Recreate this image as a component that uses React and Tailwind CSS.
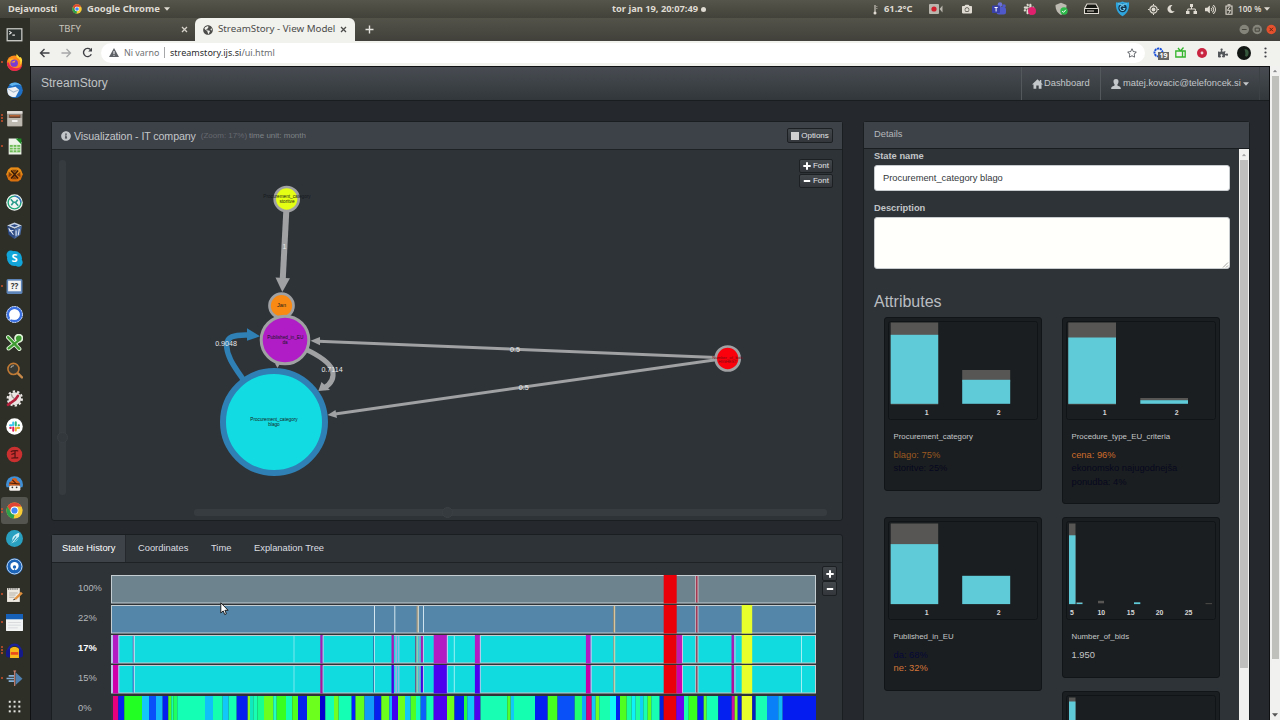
import React from 'react';
import { FaSlack, FaRegStar, FaPuzzlePiece, FaCamera, FaMoon, FaVolumeUp, FaGlobeAmericas, FaInfoCircle } from 'react-icons/fa';

const launcher = [
    {
        name: 'terminal', art: (
            <g>
                <rect x="0.5" y="2" width="15" height="12.5" fill="#c9cac6" />
                <rect x="1.7" y="3.2" width="12.6" height="10" fill="#2b322f" />
                <path d="M3 4.8l2 1.5-2 1.5M6 8.6h2.4" stroke="#e6e6e6" fill="none" />
            </g>
        )
    },
    {
        name: 'firefox', dots: 1, art: (
            <g>
                <circle cx="8" cy="8.5" r="7.2" fill="#ff8a1c" />
                <path d="M1 8c0 5 3.300 8 7 8 4.500 0 7-3 7.300-6-2 3-5 4-8 3-3-.8-4.500-3-4.500-5z" fill="#e9264f" />
                <path d="M10 0c-1 2 0 3 2 4.500 1.500 1.500 2 3.500 1 5.500 3-2.500 2.500-5 1-7-.5 0-1 0-1.300.5C12 2 11 1 10 0z" fill="#ffd93a" />
                <path d="M1.500 3l1.500 2c2-1 4-1 5 0L4 7z" fill="#ffb52a" />
                <circle cx="7.700" cy="8.600" r="3.500" fill="#7a3bd2" />
                <path d="M4.500 7.500c2 0 2.500-1.500 4.500-1.500L8 8H6z" fill="#ffa42a" />
            </g>
        )
    },
    {
        name: 'thunderbird', art: (
            <g>
                <circle cx="8.5" cy="7.800" r="7.300" fill="#1f6fc4" />
                <path d="M3 2.500C6-.5 12-.5 15 4c-3-2-7-1.500-9 0z" fill="#5fb3ef" />
                <path d="M1 6l8-1.500 3.500 3L9 14c-4 .8-7-1.500-7.500-4z" fill="#eef0f3" />
                <path d="M2 6.500l5 3 5-2" stroke="#a9b9cc" fill="none" />
            </g>
        )
    },
    {
        name: 'files', dots: 3, art: (
            <g>
                <rect x="1" y="1" width="14.500" height="14.500" rx="1" fill="#a19a90" />
                <rect x="1" y="1" width="14.500" height="2.500" fill="#dedbd6" />
                <path d="M3 4.500h10.500v3H3z" fill="#5c3d2d" />
                <path d="M3.500 5h9.500v1h-9.500z" fill="#e2793e" />
                <rect x="1.500" y="7.500" width="13.500" height="7.500" fill="#bdb8b0" />
                <rect x="5.500" y="9.500" width="5.500" height="1.800" rx=".6" fill="#f3f2f0" />
            </g>
        )
    },
    {
        name: 'calc', dots: 1, art: (
            <g>
                <path d="M2.500.5H11L14.500 4v11.500h-12z" fill="#eef3ea" />
                <path d="M9 .5h5.500V6z" fill="#1d8a24" />
                <rect x="3.500" y="6.500" width="10" height="7" fill="#6cbb55" />
                <path d="M3.500 8.800h10M3.500 11.200h10M6.800 6.500v7M10.200 6.500v7" stroke="#e3f1dc" strokeWidth=".8" />
            </g>
        )
    },
    {
        name: 'hex', art: (
            <g>
                <path d="M4.500 1.500h7L14 3.500 15.800 8 14 12.500l-2.500 2h-7L2 12.500.2 8 2 3.500z" fill="#d9710f" />
                <path d="M4.500 1.500h7L14 3.500 15.800 8H.2L2 3.500z" fill="#f0a01c" opacity=".6" />
                <path d="M4.800 4.200l6.600 7.600M11.400 4.200l-6.600 7.600" stroke="#3a1a08" strokeWidth="1.500" />
                <path d="M5.500 3.500h5L8 6.500zM5.500 12.500h5L8 9.500zM2.500 5.500L6 8l-3.500 2.500zM13.500 5.500L10 8l3.500 2.500z" fill="#5b2a0a" opacity=".75" />
            </g>
        )
    },
    {
        name: 'sync', art: (
            <g>
                <circle cx="8" cy="8" r="7.800" fill="#f1f5f3" />
                <circle cx="8" cy="8" r="6" fill="none" stroke="#1fa67a" strokeWidth="1.300" />
                <path d="M8 2a6 6 0 0 1 6 6" fill="none" stroke="#3f72c0" strokeWidth="1.300" />
                <path d="M4.500 5l2.500 2.800L5 10.500M11.500 11L9 8.200 11 5.500M7 7.800h2" fill="none" stroke="#2b9c8c" strokeWidth="1.500" />
            </g>
        )
    },
    {
        name: 'virtualbox', art: (
            <g>
                <path d="M8 .5l7 2.800-7 3-7-3z" fill="#c5d2e4" />
                <path d="M1 3.500l7 3V16l-5.500-4z" fill="#2c4a86" />
                <path d="M15 3.500l-7 3V16l5.500-4z" fill="#4a6da8" />
                <path d="M2.500 6l4.500 6M9.500 8v5M12.500 6.500l-1 6M3 8.500l4-.5" stroke="#e3eaf4" strokeWidth="1" />
                <path d="M4.500 3.300L8 2l3.500 1.300L8 4.800z" fill="#2c4a86" />
            </g>
        )
    },
    {
        name: 'skype', art: (
            <g>
                <circle cx="8" cy="8" r="7" fill="#11a5d9" />
                <circle cx="4.500" cy="4.500" r="4" fill="#11a5d9" />
                <circle cx="11.800" cy="11.800" r="3.900" fill="#11a5d9" />
                <text x="8" y="11.700" fontSize="10.500" fontWeight="700" textAnchor="middle" fill="#fff" fontFamily="Noto Sans, sans-serif">S</text>
            </g>
        )
    },
    {
        name: 'calendar', dots: 1, art: (
            <g>
                <rect x=".5" y="1" width="15" height="14" rx="1.500" fill="#5d84b8" />
                <rect x="2" y="2.500" width="12" height="10" fill="#f2f3f2" />
                <text x="8" y="10.500" fontSize="7.500" fontWeight="700" textAnchor="middle" fill="#333" fontFamily="Noto Sans, sans-serif">??</text>
            </g>
        )
    },
    {
        name: 'signal', art: (
            <g>
                <circle cx="8" cy="8" r="7.800" fill="#dfe8fb" />
                <circle cx="8" cy="8" r="6.300" fill="none" stroke="#3a6fe0" strokeWidth="2.600" />
                <circle cx="8" cy="8" r="7.500" fill="none" stroke="#dfe8fb" strokeWidth=".8" strokeDasharray="1.500 1" />
                <circle cx="8" cy="8" r="4.900" fill="#fff" />
                <path d="M3.200 13.200l.8-4 3 3z" fill="#fff" />
            </g>
        )
    },
    {
        name: 'xournal', art: (
            <g>
                <path d="M2 3l10.500 11M12.500 5.500L2.500 13.500" stroke="#dff2d8" strokeWidth="4" strokeLinecap="round" />
                <circle cx="12" cy="4" r="2.800" fill="none" stroke="#dff2d8" strokeWidth="3" />
                <path d="M2 3l10.500 11M12.500 5.500L2.500 13.500" stroke="#3e9c33" strokeWidth="2.200" strokeLinecap="round" />
                <circle cx="12" cy="4" r="2" fill="#3e9c33" stroke="#3e9c33" strokeWidth="1.300" />
            </g>
        )
    },
    {
        name: 'search', art: (
            <g>
                <path d="M11 10.500l4 4" stroke="#c88a4a" strokeWidth="2.200" strokeLinecap="round" />
                <circle cx="7" cy="6.500" r="5.200" fill="#3a3a34" stroke="#c07a34" strokeWidth="1.500" />
                <path d="M4.500 5.500a3 3 0 0 1 3-2" stroke="#a9a9a2" fill="none" />
            </g>
        )
    },
    {
        name: 'settings', art: (
            <g>
                <circle cx="8.300" cy="8" r="6" fill="#e9e6e4" />
                <circle cx="8.300" cy="8" r="6.700" fill="none" stroke="#e9e6e4" strokeWidth="2" strokeDasharray="2.200 2" />
                <path d="M5 4l1 2.500 3 2.500" stroke="#9d9590" strokeWidth="1.300" fill="none" />
                <path d="M1.800 14l7-5 2.500-3.500" stroke="#b3213c" strokeWidth="2.400" strokeLinecap="round" fill="none" />
            </g>
        )
    },
    {
        name: 'slack', art: (
            <g>
                <circle cx="8" cy="8" r="7.800" fill="#fff" />
                <g strokeWidth="1.900" strokeLinecap="round">
                    <path d="M6.800 4.300v2.200M3.800 6.800h1.500" stroke="#36c5f0" />
                    <path d="M9.200 4v3M11.900 6.800h.3" stroke="#2eb67d" />
                    <path d="M9.200 9.500v2.300M11 9.300h1.300" stroke="#ecb22e" />
                    <path d="M6.800 9v3M4 9.300h.5" stroke="#e01e5a" />
                </g>
            </g>
        )
    },
    {
        name: 'red', art: (
            <g>
                <circle cx="8" cy="8" r="7.300" fill="#c9302f" />
                <path d="M4.500 5.500c2-1.500 4-1 7-1M8.500 5v6M5 8l3-1M5 11.500c2-.8 4 .2 6.500-.5" stroke="#571414" strokeWidth="1.200" fill="none" />
            </g>
        )
    },
    {
        name: 'chef', art: (
            <g>
                <path d="M0 10a8 8 0 0 1 16 0l-.5 2.500H.5z" fill="#3f8fd6" />
                <path d="M2.500 11c0-3 2-4 3-5 0-3 5-3 5 0 1.500 1 3 2 3 5z" fill="#d4621e" />
                <path d="M3 8.500l10 1M6 5.500l4 4" stroke="#4a1d0b" />
                <rect x="3" y="11" width="10.500" height="4.800" rx="1.500" fill="#f4f0ec" />
                <circle cx="6" cy="12.500" r=".8" fill="#333" />
                <circle cx="10" cy="12.500" r=".8" fill="#333" />
            </g>
        )
    },
    { name: 'chrome', dots: 2, active: true, art: <ChromeArt /> },
    {
        name: 'feather', art: (
            <g>
                <circle cx="8" cy="8" r="8" fill="#2aa0c0" />
                <path d="M4.500 13L6 9.500C5.500 6 8.500 4 12.500 2.500 12.500 7 11 11 7 11.500z" fill="#cfeef5" />
                <path d="M4.500 13l5-7M8 11l4-4" stroke="#2aa0c0" />
            </g>
        )
    },
    {
        name: 'blue', art: (
            <g>
                <circle cx="8" cy="8" r="7.800" fill="#1c64b8" />
                <circle cx="8" cy="8" r="7" fill="none" stroke="#d5e4f5" strokeWidth=".8" />
                <circle cx="8" cy="7.600" r="3.900" fill="#fff" />
                <circle cx="8" cy="8.500" r="1.600" fill="#1c64b8" />
                <path d="M6.500 13.500L8 10l2 3.500z" fill="#1c64b8" />
            </g>
        )
    },
    {
        name: 'editor', dots: 1, art: (
            <g>
                <rect x="1" y="2" width="12" height="13" fill="#eeeae2" />
                <path d="M2.500 2v1.500M4.500 2v1.500M6.500 2v1.500M8.500 2v1.500M10.500 2v1.500" stroke="#555" />
                <path d="M3 6.500h8M3 8.500h6M3 10.500h5" stroke="#b4b0a8" />
                <path d="M7.500 12l6.500-6.500 1.800 1.500L9.500 13z" fill="#e08f3c" />
                <path d="M6.500 13.500l1-1.500 1.500 1z" fill="#333" />
            </g>
        )
    },
    {
        name: 'window', dots: 1, art: (
            <g>
                <rect x="0" y="0" width="16" height="16" rx=".8" fill="#f2f3f3" />
                <path d="M0 0h16v5H0z" fill="#1660b8" />
                <path d="M2 8h12M2 10.500h12M2 13h9" stroke="#d5d7d9" strokeWidth=".8" />
            </g>
        )
    },
    {
        name: 'audacity', dots: 3, art: (
            <g>
                <path d="M2 9a6 6.500 0 0 1 12 0" fill="none" stroke="#1a1f9c" strokeWidth="2" />
                <rect x="0" y="7" width="4.500" height="7.500" rx="2" fill="#151a8a" />
                <rect x="11.500" y="7" width="4.500" height="7.500" rx="2" fill="#151a8a" />
                <path d="M3.800 6.500c2-2.500 6.400-2.500 8.400 0V15H3.800z" fill="#f5b81d" />
                <path d="M4.500 9.500h7v2.500h-7z" fill="#e8491c" />
            </g>
        )
    },
    {
        name: 'subtitle', dots: 1, art: (
            <g>
                <path d="M9 2l6.500 6.200L9 14z" fill="#4f7fae" />
                <path d="M2.500 5.500h5M.5 8h7M2.500 10.500h5" stroke="#86b0d8" strokeWidth="1.500" />
                <path d="M8.200 1v14M7 1h2.500" stroke="#d88a78" />
            </g>
        )
    },
    {
        name: 'grid', art: (
            <g fill="#e3e3df">
                {[3.500, 8, 12.500].map(y => [3.500, 8, 12.500].map(x => <rect key={x + '-' + y} x={x - 0.9} y={y - 0.9} width="1.900" height="1.900" />))}
            </g>
        )
    }
];

function ChromeArt() {
    return (
        <g>
            <circle cx="8" cy="8" r="7.600" fill="#f7cb35" />
            <path d="M1.400 4.200A7.600 7.600 0 0 1 14.600 4.200H8A3.800 3.800 0 0 0 4.600 9.800z" fill="#e04434" />
            <path d="M1.400 4.200L4.700 9.900 8 11.800l-.8 3.800A7.600 7.600 0 0 1 1.400 4.200z" fill="#2ca04c" />
            <circle cx="8" cy="8" r="3.700" fill="#fff" />
            <circle cx="8" cy="8" r="2.900" fill="#4285f4" />
        </g>
    );
}

const Launcher = () => (
    <aside className="w-[30px] shrink-0 bg-[#2e2f27] pt-[2px] flex flex-col">
        {launcher.map(app => (
            <div key={app.name} className="h-7 shrink-0 flex items-center">
                <div className="relative z-10 w-[3px] shrink-0 flex flex-col items-end gap-[1px]">
                    {Array.from({ length: app.dots || 0 }).map((_, i) => <div key={i} className="w-[2px] h-[2px] rounded-full bg-[#d0502c]" />)}
                </div>
                <div className={app.active ? '-ml-[2px] w-[27px] h-[27px] rounded-[3px] bg-[#54554f] flex items-center justify-center' : '-ml-[2px] w-[27px] h-[27px] flex items-center justify-center'}>
                    <svg width="17" height="17" viewBox="0 0 16 16">{app.art}</svg>
                </div>
            </div>
        ))}
    </aside>
);

const Caret = ({ className }) => (
    <svg width="6" height="4" viewBox="0 0 6 4" className={className}><path d="M0 .3h6L3 3.700z" fill="currentColor" /></svg>
);

const TopBar = () => (
    <header className="h-[18px] shrink-0 flex items-center bg-linear-to-b from-[#56554b] to-[#43423a] text-[#dfdbd2] text-[9.3px] font-bold font-['Noto_Sans',sans-serif]">
        <div className="w-[72px] pl-2">Dejavnosti</div>
        <svg width="10" height="10" viewBox="0 0 16 16"><ChromeArt /></svg>
        <div className="w-[78px] pl-[5px] text-[9.5px] whitespace-nowrap">Google Chrome</div>
        <Caret className="ml-[4px]" />
        <div className="ml-[442px] w-[91px] whitespace-nowrap text-[9.3px] text-left">tor jan 19, 20:07:49</div>
        <div className="w-[5px] h-[5px] rounded-full bg-[#dfdbd2] -ml-[2px]" />
        <div className="ml-auto w-[411px] flex items-center">
            <div className="w-[12px] flex justify-center">
                <svg width="5" height="11" viewBox="0 0 5 11"><path d="M2 1v7" stroke="#dfdbd2" strokeWidth="1" /><circle cx="2" cy="9" r="1.500" fill="#dfdbd2" /><path d="M3 2.500h1.500M3 4.500h1.500" stroke="#aaa79f" strokeWidth=".7" /></svg>
            </div>
            <div className="w-[48px] pl-[3px]">61.2°C</div>
            <div className="w-[33px]">
                <svg width="14" height="10" viewBox="0 0 14 10"><rect width="10" height="10" rx="1" fill="#b9b6ae" /><path d="M10.500 5l3-3.500v7z" fill="#b9b6ae" /><circle cx="5" cy="5" r="2.600" fill="#d21f2b" /></svg>
            </div>
            <div className="w-[30px]"><FaCamera size={10} /></div>
            <div className="w-[31px]">
                <svg width="15" height="14" viewBox="0 0 15 14"><circle cx="12" cy="4" r="1.800" fill="#5059c9" /><circle cx="8" cy="2.600" r="2.300" fill="#6a72d8" /><rect x="4.500" y="5" width="9.500" height="7.500" rx="2.500" fill="#5059c9" /><rect x="0" y="3.500" width="8" height="7.500" rx=".8" fill="#3940a8" /><path d="M2.500 5.500h3.200M4.100 5.500v4" stroke="#fff" strokeWidth="1" /></svg>
            </div>
            <div className="w-[32px] flex items-end">
                <FaSlack size={12} />
                <div className="w-[8px] h-[8px] rounded-full bg-[#e0206c] -ml-[7px]" />
            </div>
            <div className="w-[29px]">
                <svg width="13" height="14" viewBox="0 0 13 14"><path d="M6 .8L11.500 3c0 5-2 8-5.500 10C2.500 11 .5 8 .5 3z" fill="#bdbab2" /><circle cx="9" cy="9" r="3.700" fill="#2db84a" /><path d="M7.200 9l1.300 1.400 2.300-2.600" stroke="#fff" fill="none" /></svg>
            </div>
            <div className="w-[31px]">
                <svg width="15" height="12" viewBox="0 0 15 12"><path d="M3 1h9l2.500 4.500v5H.5v-5z" fill="#161613" stroke="#dfdbd2" strokeWidth="1.100" /><path d="M1 5.500h13M3 8h7" stroke="#dfdbd2" strokeWidth="1.200" /></svg>
            </div>
            <div className="w-[33px]">
                <svg width="15" height="16" viewBox="0 0 15 16"><path d="M7.500.5c2 1 4 1.300 6.500.8.5 6-1 10.700-6.500 14C2 12 .5 7.300 1 1.300 3.500 1.800 5.500 1.500 7.500.5z" fill="#2ea5dd" /><circle cx="7.500" cy="7" r="4.200" fill="#14354c" /><path d="M9.300 5.500a2.400 2.400 0 1 0 .5 2H7.800M3 2.800l4.500 1 4.500-1" stroke="#6fc8ee" strokeWidth="1.100" fill="none" /></svg>
            </div>
            <div className="w-[19px]">
                <svg width="11" height="11" viewBox="0 0 11 11"><circle cx="5.500" cy="5.500" r="3.600" fill="none" stroke="#dfdbd2" strokeWidth="1.200" /><circle cx="5.500" cy="5.500" r="1.900" fill="#dfdbd2" /><path d="M5.500 0v1.500M5.500 9.500V11M0 5.500h1.500M9.500 5.500H11" stroke="#dfdbd2" /></svg>
            </div>
            <div className="w-[19px]"><FaMoon size={8} /></div>
            <div className="w-[19px]">
                <svg width="11" height="10" viewBox="0 0 11 10"><path d="M4 0h3v3H4zM0 7h3.500v3H0zM7.500 7H11v3H7.500z" fill="#dfdbd2" /><path d="M5.500 3v2M1.800 7V5h7.500v2" stroke="#dfdbd2" fill="none" /></svg>
            </div>
            <div className="w-[20px]"><FaVolumeUp size={11} /></div>
            <div className="w-[13px]">
                <svg width="8" height="11" viewBox="0 0 8 11"><path d="M1 2h6v8.300H1zM2.500.8h3" fill="none" stroke="#dfdbd2" strokeWidth="1.100" /><path d="M4.500 3L2.500 6.300h3L3.500 9.500" stroke="#dfdbd2" fill="none" /></svg>
            </div>
            <div className="w-[26px] text-[8.2px] font-semibold whitespace-nowrap">100 %</div>
            <Caret />
        </div>
    </header>
);

const Cross = ({ color }) => (
    <svg width="7" height="7" viewBox="0 0 7 7"><path d="M1 1l5 5M6 1L1 6" stroke={color} strokeWidth="1.300" /></svg>
);

const Browser = () => (
    <div className="shrink-0 font-['Noto_Sans',sans-serif]">
        <div className="h-[23px] flex bg-linear-to-b from-[#54534a] to-[#41403a]">
            <div className="w-[165px] pl-[29px] pr-[7px] flex items-center justify-between text-[9.5px] text-[#c9c6bd]">
                <span>TBFY</span>
                <Cross color="#d5d2ca" />
            </div>
            <div className="w-[160px] pl-[8px] pr-[8px] flex items-center rounded-t-[6px] bg-[#f1f1ee] text-[#4c4c4a]">
                <FaGlobeAmericas size={10} />
                <span className="ml-[5px] mr-auto text-[9.75px] whitespace-nowrap">StreamStory - View Model</span>
                <Cross color="#4c4c4a" />
            </div>
            <svg className="ml-[10px] mt-[7px]" width="9" height="9" viewBox="0 0 9 9"><path d="M4.500.5v8M.5 4.500h8" stroke="#e4e2dc" strokeWidth="1.400" /></svg>
            <div className="ml-auto mr-[4px] flex items-center gap-[3px]">
                <svg width="10.500" height="11" viewBox="0 0 11 11"><circle cx="5.500" cy="5.500" r="5" fill="#85847b" /><path d="M3 5.500h5" stroke="#45443c" /></svg>
                <svg width="10.500" height="11" viewBox="0 0 11 11"><circle cx="5.500" cy="5.500" r="5" fill="#85847b" /><path d="M3.300 4h4.400v3.300H3.300z" stroke="#45443c" fill="none" /></svg>
                <svg width="10.500" height="11" viewBox="0 0 11 11"><circle cx="5.500" cy="5.500" r="5" fill="#e5512d" /><path d="M3.700 3.700l3.600 3.600M7.300 3.700L3.700 7.300" stroke="#5c2213" /></svg>
            </div>
        </div>
        <div className="h-[25px] pb-[2px] flex items-center bg-[#f1f1ee]">
            <svg className="ml-[9px]" width="11" height="10" viewBox="0 0 11 10"><path d="M10.500 5H1.500M5.500 1L1.500 5l4 4" stroke="#3f4144" strokeWidth="1.400" fill="none" /></svg>
            <svg className="ml-[11px]" width="11" height="10" viewBox="0 0 11 10"><path d="M.5 5h9M5.500 1l4 4-4 4" stroke="#a6a8a8" strokeWidth="1.300" fill="none" /></svg>
            <svg className="ml-[10px]" width="11" height="11" viewBox="0 0 11 11"><path d="M9.300 7.300A4.100 4.100 0 1 1 8.500 2.600" stroke="#3f4144" strokeWidth="1.400" fill="none" /><path d="M10 .8v3.800H6.200z" fill="#3f4144" /></svg>
            <div className="ml-[8px] w-[1044px] h-[20px] rounded-full bg-white flex items-center px-[8px] text-[9.2px]">
                <svg width="10" height="9" viewBox="0 0 10 9"><path d="M5 0l5 9H0z" fill="#5f6368" /><path d="M5 3v3M5 6.800v1" stroke="#fff" /></svg>
                <span className="ml-[5px] w-[40px] text-[8.9px] text-[#6f7173] whitespace-nowrap">Ni varno</span>
                <div className="w-px h-[11px] bg-[#a5a7a9]" />
                <span className="ml-[5px] text-[#6b6d70] text-[9.05px]"><span className="text-[#2b2c2e]">streamstory.ijs.si</span>/ui.html</span>
                <FaRegStar size={10} className="ml-auto text-[#5f6368]" />
            </div>
            <div className="ml-[8px] w-[22px] relative">
                <svg width="11" height="11" viewBox="0 0 11 11"><circle cx="5.500" cy="5.500" r="4" fill="none" stroke="#1a50d8" strokeWidth="1.900" strokeDasharray="2.200 .6" /></svg>
                <span className="absolute left-[5px] top-[5px] w-[11px] h-[8px] leading-[8px] text-center bg-[#666] text-white text-[7px] font-bold">19</span>
            </div>
            <svg width="11" height="11" viewBox="0 0 11 11"><path d="M.8 4h9.400v6H.8zM7.500 4v6M3 1l2.500 3L8.500.500" stroke="#35b52c" strokeWidth="1.300" fill="none" /></svg>
            <svg className="ml-[11px]" width="10" height="10" viewBox="0 0 10 10"><circle cx="5" cy="5" r="5" fill="#c92440" /><circle cx="5" cy="5" r="1.400" fill="#f3d5d9" /></svg>
            <FaPuzzlePiece size={10} className="ml-[11px] text-[#54575a]" />
            <svg className="ml-[9px]" width="14" height="14" viewBox="0 0 14 14"><circle cx="7" cy="7" r="7" fill="#121714" /><path d="M7.500 3c4 0 5 3 3.500 6.500-1 1.500-2.500 1.500-3 0 1-2 0-3.500-.5-6.500z" fill="#35573b" /></svg>
            <svg className="ml-[13px]" width="3" height="11" viewBox="0 0 3 11" fill="#3f4144"><circle cx="1.500" cy="1.500" r="1.100" /><circle cx="1.500" cy="5.500" r="1.100" /><circle cx="1.500" cy="9.500" r="1.100" /></svg>
        </div>
    </div>
);

const NavBar = () => (
    <nav className="h-[35px] shrink-0 flex items-center border-y border-t-[#0e1012] border-b-[#1a1d1f] bg-linear-to-b from-[#484c52] via-[#3d4247] to-[#32373b] text-[#c4c7c9] text-[9.33px]">
        <span className="ml-[10px] pb-[1px] text-[12px] text-[#c0c3c5]">StreamStory</span>
        <div className="ml-auto h-full flex">
            <div className="w-[79px] flex items-center border-l border-[#53585d] pl-[10px]">
                <svg width="11" height="10" viewBox="0 0 11 10"><path d="M5.500.3L7.800 2.500V1h1.500v2.900L11 5.600H9.500V9.700H6.700V6.500H4.300v3.200H1.500V5.600H0z" fill="currentColor" /></svg>
                <span className="ml-[1px]">Dashboard</span>
            </div>
            <div className="w-[159px] flex items-center border-l border-[#53585d] pl-[10px] whitespace-nowrap">
                <svg width="10" height="10" viewBox="0 0 10 10"><path d="M5 0c2 0 2.700 1.300 2.500 3C7.300 4.500 6.500 5 6.300 6c0 1 3.400 1.200 3.500 3.200V10H.2v-.8C.3 7.200 3.700 7 3.700 6 3.500 5 2.700 4.500 2.500 3 2.300 1.300 3 0 5 0z" fill="currentColor" /></svg>
                <span className="ml-[2px]">matej.kovacic@telefoncek.si</span>
                <Caret className="ml-[2px]" />
            </div>
            <div className="w-[10px] border-l border-[#3c4146]" />
        </div>
    </nav>
);

const Sign = ({ minus }) => (
    <svg width="8" height="8" viewBox="0 0 8 8"><path d={minus ? 'M.800 4h6.400' : 'M.300 4h7.400M4 .300v7.400'} stroke="#fff" strokeWidth="2" /></svg>
);

const FontButton = ({ minus }) => (
    <button className="w-[34px] h-[14px] flex items-center justify-center gap-[2px] rounded-[2px] border border-[#1d2023] bg-linear-to-b from-[#43484d] to-[#33373b] text-[8px] text-[#e4e5e6]">
        <Sign minus={minus} />
        Font
    </button>
);

const SquareButton = ({ minus }) => (
    <button className="w-[15px] h-[15px] flex items-center justify-center rounded-[2px] border border-[#1d2023] bg-linear-to-b from-[#43484d] to-[#33373b]">
        <Sign minus={minus} />
    </button>
);

const Graph = () => (
    <svg width="776" height="346" viewBox="66 150 776 346" className="font-['Liberation_Sans',Arial,sans-serif]">
        <g stroke="#9fa1a2" fill="none">
            <path d="M286.300 211L282.700 280" strokeWidth="6" />
            <path d="M716 357.500L318 341.200" strokeWidth="3" />
            <path d="M716 359.700L335 414" strokeWidth="3" />
            <path d="M305 349C318 355 329 362 332.500 370C334.500 378 331 384 324 388" strokeWidth="5" />
        </g>
        <g fill="#9fa1a2">
            <path d="M275.500 277.500L290 278.300 282.300 292z" />
            <path d="M310.500 340.800L320 337v8.200z" />
            <path d="M327.500 415L335.500 410l1.500 8z" />
            <path d="M318.300 391L321.500 382l8.500 8z" />
        </g>
        <path d="M243.500 380C234 366 227 357 226.500 345C227 337 233 334.500 249 335" stroke="#2f80b5" strokeWidth="5.500" fill="none" />
        <path d="M260 336.300L247 328.300v12.500z" fill="#2f80b5" />
        <circle cx="286.700" cy="199" r="12" fill="#e4ff14" stroke="#9fa1a2" strokeWidth="2.700" />
        <circle cx="281.500" cy="305.700" r="12" fill="#f98a14" stroke="#9fa1a2" strokeWidth="2.700" />
        <circle cx="285" cy="340" r="23.800" fill="#b01cc6" stroke="#9fa1a2" strokeWidth="3" />
        <path d="M275 363.500h5L277.500 368z" fill="#9fa1a2" />
        <circle cx="274" cy="422" r="51" fill="#12dce1" stroke="#2f80b5" strokeWidth="6" />
        <circle cx="727.700" cy="358.500" r="12" fill="#fb000c" stroke="#9fa1a2" strokeWidth="2.700" />
        <g fill="#15191b" fontSize="4.700" textAnchor="middle">
            <text x="287" y="198">Procurement_category</text>
            <text x="287" y="202.700">storitve</text>
            <text x="281.500" y="307.300" fontSize="5.600">Jan</text>
            <text x="285.300" y="339">Published_in_EU</text>
            <text x="285" y="344">da</text>
            <text x="274" y="421">Procurement_category</text>
            <text x="274" y="426">blago</text>
            <g fill="#7a0d12" fontSize="4.200">
                <text x="727.500" y="358.500">Number_of_bids</text>
                <text x="727.500" y="362.500">HIGHEST</text>
            </g>
        </g>
        <g fill="#e8e9ea" fontSize="7.100" textAnchor="middle">
            <text x="226" y="345.500">0.9048</text>
            <text x="332" y="371.500">0.7114</text>
            <text x="515" y="351.500">0.5</text>
            <text x="523.700" y="389.500">0.5</text>
            <text x="284.500" y="248.500">1</text>
        </g>
    </svg>
);

const Visualization = () => (
    <section className="h-[400px] shrink-0 flex flex-col rounded-[3px] border border-[#1b1e21] bg-[#2e3338]">
        <div className="h-[28px] shrink-0 flex items-center pl-[9px] pr-[9px] border-b border-[#1f2225] bg-[#3d4148] text-[#c3c6c8]">
            <FaInfoCircle size={10} />
            <span className="ml-[3px] text-[10.67px] tracking-[-0.01em]">Visualization - IT company</span>
            <span className="ml-[5px] text-[8px] text-[#666a6f]">(Zoom: 17%)</span>
            <span className="ml-[2px] text-[8px] text-[#7d8387]">time unit: month</span>
            <button className="ml-auto w-[46px] h-[15px] flex items-center justify-center gap-[2px] rounded-[2px] border border-[#1d2023] bg-linear-to-b from-[#43484d] to-[#33373b] text-[8px] text-[#e4e5e6]">
                <span className="w-[8px] h-[8px] bg-[#cfcfcf]" />
                Options
            </button>
        </div>
        <div className="relative flex-1 flex flex-col">
            <div className="h-[346px] flex">
                <div className="w-[7px] ml-[7px] mt-[10px] h-[335px] rounded-[3px] bg-[#363b40] flex flex-col items-center">
                    <div className="mt-[272px] w-[11px] h-[11px] shrink-0 rounded-full bg-[#33383d] border border-[#3a3f44]" />
                </div>
                <Graph />
            </div>
            <div className="ml-[142px] mt-[13px] w-[633px] h-[7px] rounded-[3px] bg-[#373c41] flex items-center">
                <div className="ml-[248px] w-[11px] h-[11px] rounded-full bg-[#363b40] border border-[#3c4146]" />
            </div>
            <div className="absolute right-[9px] top-[9px] flex flex-col gap-[1px]">
                <FontButton />
                <FontButton minus />
            </div>
        </div>
    </section>
);

// every bar is a list of [x, width, colour]
const red = '#e90008';
const yellow = '#e9ff2c';
const redLine = [[695.300, 1, '#d9c0c8'], [696.300, 1.300, '#b01030'], [697.600, 0.800, '#e8c8cc']];
const thinEdges = [
    [293.500, 1, '#7be6ee'], [373.300, 0.800, '#2f5a9a'], [374.100, 0.900, '#b9e8f2'],
    [395.200, 2, '#9fa6dd'], [398.200, 1.200, '#a9b6e0'], [415.300, 1, '#8a2a6a'], [416.600, 1, '#d9c890'],
    [418.500, 2, '#7fa8c8'], [423, 1, '#b9c8e8'], [453.800, 1, '#9df0f4'], [613, 1.200, '#7fa59a'], [614.200, 1, '#e3d5a8'], [801, 1, '#a5eef2']
];
const levels = [
    { label: '100%', fill: '#6d838d', segments: [[663.700, 13, red], ...redLine] },
    {
        label: '22%', fill: '#5386a8',
        segments: [
            [374, 1, '#d5e6f0'], [394.300, 1, '#d5e6f0'], [416.600, 1.200, '#b59a70'], [417.800, 1, '#e4e0d0'], [423, 1, '#cfe3ee'],
            [613, 1, '#8c8a78'], [614, 1.200, '#d9c49c'], [663.700, 13, red], ...redLine, [741.700, 10.500, yellow]
        ]
    },
    {
        label: '17%', current: true, fill: '#12dbe0',
        segments: [
            [111, 2, '#b9c6e6'], [113, 5.300, '#b21cc2'], [118.300, 1, '#d9b0e6'], [132.800, 0.900, '#8a3aa0'], [133.700, 1, '#d8e8f4'],
            [320.300, 2.400, '#a51cb4'], [322.700, 1, '#c9b8e6'], [391.500, 2.400, '#a51cb4'], ...thinEdges, [420.900, 2, '#a51cb4'],
            [433.700, 13.200, '#b21cc2'], [446.900, 1, '#d9c8ee'], [474.900, 5, '#b21cc2'], [479.900, 1, '#c9c8ee'], [585.900, 4.800, '#b21cc2'], [590.700, 1, '#c9c8ee'],
            [663.700, 13, red], [676.700, 5.300, '#c01cb4'], [682, 1, '#d9b8e6'], ...redLine, [731.500, 2.500, '#a51cb4'], [734.500, 1, '#c9b8e6'], [741.700, 10.500, yellow]
        ]
    },
    {
        label: '15%', fill: '#12dbe0',
        segments: [
            [111, 2, '#b9c6e6'], [113, 5.300, '#cf00ac'], [118.300, 1, '#d9b0e6'], [132.800, 0.900, '#2a20b0'], [133.700, 1, '#d8e8f4'],
            [320.300, 2.400, '#b2109a'], [322.700, 1, '#a9b8e6'], [391.500, 2.400, '#4800e0'], ...thinEdges, [420.900, 2, '#4800e0'],
            [433.700, 13.200, '#4d00ee'], [446.900, 1, '#a9c8ee'], [474.900, 5, '#4d00ee'], [479.900, 1, '#a9c8ee'], [585.900, 4.800, '#c800a8'], [590.700, 1, '#c9c8ee'],
            [663.700, 13, red], [676.700, 5.300, '#cf00ac'], [682, 1, '#d9b8e6'], ...redLine, [731.500, 2.500, '#b0109a'], [734.500, 1, '#c9b8e6'], [741.700, 10.500, yellow]
        ]
    }
];

// leaf level: [start, colour], each one lasts until the next start
const leaves = [
    [111, '#3a3040'], [113, '#e6007e'], [118.300, '#0620ee'], [124.300, '#22ff22'], [142, '#12c8fa'], [149, '#0a50fa'], [156, '#12b8f8'], [162.700, '#0420ee'],
    [168.300, '#50f822'], [171.300, '#14ffb0'], [173.300, '#20ff60'], [177.300, '#14ffb4'], [205, '#10c0f8'], [213, '#14ffb0'], [222.700, '#12c8f8'], [228.700, '#14ffb0'],
    [236.700, '#0620f0'], [247.700, '#88f820'], [250, '#12e8c0'], [253.300, '#18ffb4'], [257.300, '#18ff90'], [264, '#6cff1e'], [273.300, '#22ffc0'], [276.700, '#38ff20'],
    [286, '#14ffb0'], [292.300, '#50ff22'], [298, '#0620f0'], [307, '#6cff1e'], [320, '#0400d0'], [325.300, '#14ffb4'], [334, '#70ff20'], [338.700, '#14ffb4'],
    [351.700, '#0420ff'], [355.500, '#60ff20'], [364.500, '#109cf8'], [374.300, '#0620f0'], [381.300, '#6cff1e'], [389.300, '#14b0f8'], [392, '#4000f0'], [398, '#6cff1e'],
    [405, '#12c8f8'], [410.700, '#50ff20'], [416, '#14ffb4'], [420.700, '#0a60f8'], [426.300, '#14ffb4'], [433.700, '#4d00ee'], [447, '#6cff1e'], [454.500, '#0420f0'],
    [464, '#22ff40'], [467.300, '#12c8f8'], [474.500, '#5000ee'], [480.500, '#18ffb4'], [507.300, '#50ff30'], [510.700, '#12c8f8'], [514, '#14ffb0'], [535, '#0420f0'],
    [547.700, '#44ff20'], [557.500, '#0a50f8'], [574.700, '#20ff70'], [582, '#12a8f8'], [586.300, '#d80080'], [591.700, '#12c8f8'], [595.700, '#70ff20'], [599.300, '#18ffb0'],
    [610, '#10f8f8'], [616, '#0420f0'], [620, '#50ff20'], [626.700, '#18ffa0'], [631.700, '#10f0f8'], [635.700, '#20ffa0'], [640, '#10d0f8'], [643.300, '#18ffb0'],
    [647.700, '#60ff20'], [651.300, '#18ffb4'], [659.700, '#0420e0'], [663.700, red], [676.300, '#7000f0'], [684, '#18ffb0'], [688.700, '#38ff20'], [697.500, '#0420f0'],
    [703.700, '#60ff30'], [706.700, '#14ffb4'], [718.300, '#0420f0'], [731.700, '#d010a0'], [734.700, '#80ff20'], [737.700, '#0420e0'], [741.700, yellow], [752.300, '#0420c0'],
    [755.700, '#18ffb4'], [767, '#0a80f8'], [778.300, '#10b8f8'], [782.700, '#041cf0'], [816, '#000']
];

const History = () => (
    <section className="h-[187px] shrink-0 flex flex-col rounded-t-[3px] border border-[#1b1e21] bg-[#2e3338]">
        <div className="h-[28px] shrink-0 flex border-b border-[#1f2225] text-[9.33px] text-[#dcdee0]">
            <div className="w-[74px] pl-[10px] flex items-center bg-[#3e434a] text-white border-r border-[#25282c]">State History</div>
            <div className="w-[73px] pl-[12px] flex items-center">Coordinates</div>
            <div className="w-[43px] pl-[12px] flex items-center">Time</div>
            <div className="pl-[12px] flex items-center whitespace-nowrap">Explanation Tree</div>
        </div>
        <div className="flex pt-[12px]">
            <div className="w-[59px] pl-[26px] text-[9.33px] text-[#b4b8ba]">
                {levels.map(l => (
                    <div key={l.label} className={l.current ? 'h-[30px] leading-[27px] font-bold text-white' : 'h-[30px] leading-[27px]'}>{l.label}</div>
                ))}
                <div className="h-[30px] leading-[27px]">0%</div>
            </div>
            <svg width="706" height="150" viewBox="111 575 706 150">
                {levels.map((l, i) => {
                    const y = 575.500 + i * 30;
                    return (
                        <g key={l.label}>
                            <rect x="111.500" y={y} width="704" height="27.500" fill={l.fill} stroke="#c3cdd2" strokeWidth="1" />
                            {l.segments.map(([x, w, color], n) => <rect key={n} x={x} y={y + (w > 2 ? -0.500 : 0.500)} width={w} height={w > 2 ? 28.500 : 26.500} fill={color} />)}
                        </g>
                    );
                })}
                {leaves.slice(0, -1).map(([x, color], i) => <rect key={x} x={x} y="696" width={leaves[i + 1][0] - x} height="30" fill={color} />)}
            </svg>
            <div className="ml-[5px] -mt-[9px] flex flex-col">
                <SquareButton />
                <SquareButton minus />
            </div>
        </div>
    </section>
);

const cyan = '#5fcad8';
const grey = '#575655';

const attributes = [
    [
        {
            name: 'Procurement_category', height: 'h-[174px] mb-[26px]',
            bars: [[2.700, 2, 47.500, 82, grey], [2.700, 14.300, 47.500, 69, cyan], [74.200, 49.500, 48, 12, grey], [74.200, 59.300, 48, 24, cyan]],
            ticks: [['1', 38.700], ['2', 110.700]],
            values: [['blago: 75%', 'text-[#9a5a22]'], ['storitve: 25%', 'text-[#06081f]']]
        },
        {
            name: 'Published_in_EU', height: 'h-[174px] mb-[27px]',
            bars: [[2.700, 3, 47.500, 80.600, grey], [2.700, 23.600, 47.500, 60, cyan], [74.200, 55.300, 48, 28.300, cyan]],
            ticks: [['1', 38.700], ['2', 110.700]],
            values: [['da: 68%', 'text-[#060938]'], ['ne: 32%', 'text-[#d5763a]']]
        }
    ],
    [
        {
            name: 'Procedure_type_EU_criteria', height: 'h-[187px] mb-[13px]',
            bars: [[2.300, 2, 47.700, 82, grey], [2.300, 17, 47.700, 66.300, cyan], [74.300, 77.500, 47.700, 2.500, grey], [74.300, 79.700, 47.700, 3.600, cyan]],
            ticks: [['1', 38.700], ['2', 110.700]],
            values: [['cena: 96%', 'text-[#cd6c2c]'], ['ekonomsko najugodnejša ponudba: 4%', 'text-[#06081f]']]
        },
        {
            name: 'Number_of_bids', height: 'h-[161px] mb-[13px]',
            bars: [
                [3, 3, 6.500, 80.600, grey], [3, 14.800, 6.500, 68.800, cyan], [10.500, 81.500, 6, 1, grey], [10.500, 82.300, 6, 1.300, cyan],
                [32, 80.300, 6, 2.500, grey], [68, 81.800, 6.300, 1.800, cyan], [139.500, 82.800, 6.500, 0.800, grey]
            ],
            ticks: [['5', 6], ['10', 35.300], ['15', 64.700], ['20', 93.500], ['25', 122.500]],
            values: [['1.950', 'text-[#c3c6c8]']]
        },
        {
            height: 'h-[161px]',
            bars: [[3, 3, 6.500, 80.600, grey], [3, 7, 6.500, 76.600, cyan]],
            ticks: [],
            values: []
        }
    ]
];

const AttributeCard = ({ attribute }) => (
    <div className={`${attribute.height} w-[157.5px] shrink-0 p-[3px] rounded-[3px] border border-[#121517] bg-[#1b1e20]`}>
        <svg width="150" height="99" viewBox="0 0.5 150 99" className="rounded-[2px] font-['Liberation_Sans',Arial,sans-serif]">
            <rect x=".5" y="1" width="149" height="98" rx="2" fill="none" stroke="#111416" />
            {attribute.bars.map(([x, y, w, h, color], i) => <rect key={i} x={x} y={y} width={w} height={h} fill={color} />)}
            {attribute.ticks.map(([text, x]) => (
                <text key={text} x={x} y="94.300" fontSize="6.900" fontWeight="700" textAnchor="middle" fill="#d5d7d8">{text}</text>
            ))}
        </svg>
        {attribute.name && (
            <div className="pl-[5.5px] pt-[11px]">
                <div className="text-[7.85px] leading-[12px] text-[#c3c6c8]">{attribute.name}</div>
                <div className="mt-[6px] text-[9.33px] leading-[13.33px]">
                    {attribute.values.map(([text, color]) => <div key={text} className={color}>{text}</div>)}
                </div>
            </div>
        )}
    </div>
);

const Details = () => (
    <section className="w-[387px] h-[620px] flex flex-col rounded-[3px] border border-[#1b1e21] bg-[#2e3338] text-[9.33px]">
        <div className="h-[27px] shrink-0 pl-[10px] flex items-center border-b border-[#1a1d20] bg-[#3d4148] text-[#b4b8bb]">Details</div>
        <div className="flex flex-1 min-h-0">
            <div className="w-[375px] pl-[10px] overflow-hidden">
                <div className="h-[16px] leading-[14px] font-bold text-[#c3c6c8]">State name</div>
                <div className="w-[356px] h-[26px] flex items-center pl-[8px] pt-[1px] rounded-[3px] bg-white border border-[#c8cccf] text-[#33383c]">Procurement_category blago</div>
                <div className="mt-[10px] h-[16px] leading-[14px] font-bold text-[#c3c6c8]">Description</div>
                <div className="w-[356px] h-[52px] flex items-end justify-end rounded-[3px] bg-[#fffffc] border border-[#c8cccf]">
                    <svg width="7" height="7" viewBox="0 0 7 7"><path d="M1 6.500L6 1.500M4 6.500L6 4.500" stroke="#777" strokeWidth=".7" /></svg>
                </div>
                <h4 className="mt-[23px] mb-[6px] text-[16px] leading-[19px] text-[#b9bdc0]">Attributes</h4>
                <div className="ml-[10px] flex gap-[20.5px]">
                    {attributes.map((column, i) => (
                        <div key={i} className="flex flex-col">
                            {column.map((a, n) => <AttributeCard key={n} attribute={a} />)}
                        </div>
                    ))}
                </div>
            </div>
            <div className="w-[10px] bg-[#f1f1f0] flex flex-col items-center">
                <div className="h-[11px] flex items-center text-[#a5a5a5]"><Caret className="rotate-180 scale-75" /></div>
                <div className="w-[8px] h-[508px] bg-[#bfbfbe]" />
            </div>
        </div>
    </section>
);

export default function App() {
    return (
        <div className="relative w-[1280px] h-[720px] overflow-hidden flex flex-col bg-[#272b30] font-['Liberation_Sans',Arial,sans-serif]">
            <TopBar />
            <div className="h-[702px] flex">
                <Launcher />
                <div className="flex-1 min-w-0 flex flex-col">
                    <Browser />
                    <div className="h-[654px] flex">
                        <div className="w-[1240px] border-x border-[#0e1012] bg-[#25292e] overflow-hidden">
                            <NavBar />
                            <div className="pl-[20px] pt-[20px] flex gap-[20px]">
                                <div className="w-[792px] flex flex-col gap-[13px]">
                                    <Visualization />
                                    <History />
                                </div>
                                <Details />
                            </div>
                        </div>
                        <div className="w-[10px] bg-[#f1f1f0] flex flex-col items-center text-[#555]">
                            <div className="h-[10px] flex items-center text-[#8a8a8a]"><Caret className="rotate-180 scale-75" /></div>
                            <div className="w-[7px] h-[583px] bg-[#bfbfbb]" />
                            <Caret className="mt-auto mb-[3px]" />
                        </div>
                    </div>
                </div>
            </div>
            <svg className="absolute left-[220px] top-[602px]" width="9" height="14" viewBox="0 0 9 14"><path d="M.8.800v10.200l2.400-2.100 1.500 3.600 1.700-.7-1.500-3.500h3.200z" fill="#fff" stroke="#111" strokeWidth=".9" /></svg>
        </div>
    );
}
